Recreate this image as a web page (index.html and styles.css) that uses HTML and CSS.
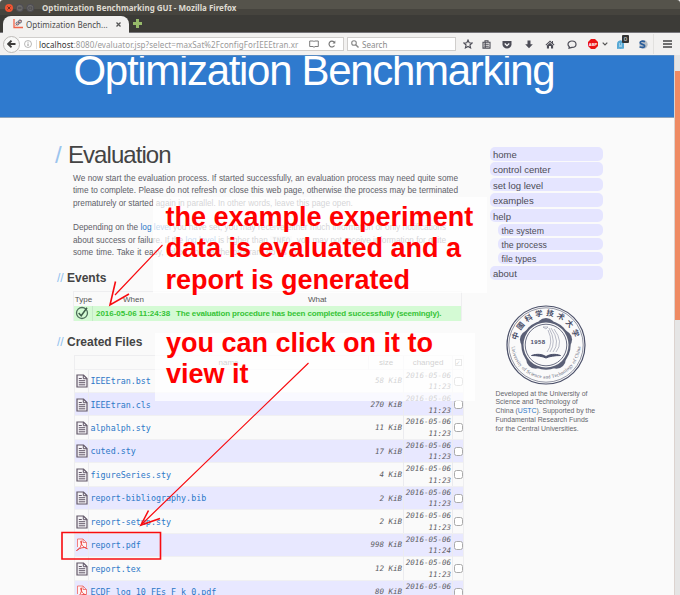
FILE: index.html
```html
<!DOCTYPE html>
<html lang="en">
<head>
<meta charset="utf-8">
<title>Optimization Benchmarking GUI</title>
<link rel="stylesheet" href="styles.css">
</head>
<body>
<svg width="0" height="0" class="defs">
  <symbol id="doc" viewBox="0 0 12 14"><path d="M1 1h6.500l3.500 3.500v8.500H1z" fill="#f4f2f6" stroke="#625868" stroke-width="1.200"/><path d="M7.300 1v3.700H11M2.800 4.500h3M2.800 6.700h6.400M2.800 8.700h6.400M2.800 10.800h6.400" fill="none" stroke="#625868" stroke-width="1"/></symbol>
  <symbol id="pdf" viewBox="0 0 12 14"><path d="M1.500 9V1h5.500l3.500 3.500V9M7 1v3.500h3.500" fill="#fff5f5" stroke="#f0635e" stroke-width=".8"/><path d="M.5 12.500C4 11.500 6.500 5.500 5.200 2.800 4 2.500 4.800 8.500 11.300 10.800 11 8.500 4 9.300.5 12.500z" fill="none" stroke="#ef4a45" stroke-width="1"/></symbol>
</svg>
<div class="window">
  <div class="titlebar">
    <svg class="lights" width="30" height="12" viewBox="0 0 30 12"><circle cx="4" cy="6" r="4" fill="#ee5433"/><path d="M2.500 4.500l3 3m0-3l-3 3" stroke="#71301f"/><circle cx="14.700" cy="6" r="3.600" fill="#6b6a68" stroke="#4c4b55"/><path d="M13 6h3.400" stroke="#45434a"/><circle cx="25.300" cy="6" r="3.600" fill="#6b6a68" stroke="#4c4b55"/><path d="M23.800 5h3v2.200h-3z" stroke="#45434a" fill="none" stroke-width=".7"/></svg>
    <span class="wintitle">Optimization Benchmarking GUI - Mozilla Firefox</span>
  </div>
  <div class="tabs">
    <div class="tab">
      <svg width="10" height="10" viewBox="0 0 10 10"><path d="M1 0v8.500h9" stroke="#f0644a" stroke-width="1.300" fill="none"/><path d="M2.500 6.500l2-1.500 4-4" stroke="#e86d5a" fill="none"/><circle cx="4.500" cy="4.500" r="1.500" fill="none" stroke="#5a6070"/><circle cx="7" cy="2.500" r="1.500" fill="none" stroke="#5a6070"/></svg>
      <span class="tabname">Optimization Bench...</span>
      <svg class="close" width="5" height="5" viewBox="0 0 5 5"><path d="M.5.5l4 4m0-4l-4 4" stroke="#555" stroke-width="1.300"/></svg>
    </div>
    <svg class="plus" width="9" height="9" viewBox="0 0 9 9"><path d="M4.500 0v9M0 4.500h9" stroke="#97b96a" stroke-width="3"/></svg>
  </div>
  <div class="toolbar">
    <div class="back"><svg width="9" height="8" viewBox="0 0 9 8"><path d="M8.500 4H1.500M4.500.7L1.200 4l3.300 3.300" fill="none" stroke="#3d3c3b" stroke-width="1.900"/></svg></div>
    <div class="url">
      <svg width="8" height="8" viewBox="0 0 8 8"><circle cx="4" cy="4" r="3.500" fill="none" stroke="#999" stroke-width=".7"/><path d="M4 3.500v2.500M4 1.800v.8" stroke="#888" stroke-width=".9"/></svg>
      <span class="address"><b>localhost</b>:8080/evaluator.jsp?select=maxSat%2FconfigForIEEEtran.xr</span>
      <svg class="reader" width="10" height="8" viewBox="0 0 10 8"><path d="M.7 1h3.500l.8.700L5.800 1h3.500v5.500H6L5 7.300 4 6.500H.7z" fill="none" stroke="#7b7b7b"/></svg>
      <svg class="reload" width="8" height="8" viewBox="0 0 8 8"><path d="M6.500 5.500A2.900 2.900 0 1 1 6 2" fill="none" stroke="#777" stroke-width="1.200"/><path d="M7.300.5v3H4.500z" fill="#777"/></svg>
    </div>
    <div class="search"><svg width="8" height="8" viewBox="0 0 8 8"><circle cx="3" cy="3" r="2.300" fill="none" stroke="#888" stroke-width="1.100"/><path d="M4.700 4.700l2.800 2.800" stroke="#888" stroke-width="1.400"/></svg><span>Search</span></div>
    <div class="tools">
      <i><svg width="10" height="10" viewBox="0 0 10 10"><path d="M5 1l1.200 2.700 2.900.3-2.200 2 .7 2.900L5 7.400 2.400 8.900 3.100 6 .9 4l2.900-.3z" fill="none" stroke="#4d4d56" stroke-width="1.100"/></svg></i>
      <i><svg width="9" height="9" viewBox="0 0 9 9"><path d="M1 2.200h7v5.900H1zM3 2V.8h3V2M2.300 4.300h4.500M2.300 6.200h4.500M3.200 2.200v5.500" fill="none" stroke="#4d4d56" stroke-width="1.100"/></svg></i>
      <i><svg width="10" height="9" viewBox="0 0 10 9"><path d="M.5 1h9v3.200a4.500 4.300 0 0 1-9 0z" fill="#4d4d56"/><path d="M2.700 3.500L5 5.600l2.300-2.100" fill="none" stroke="#fff" stroke-width="1.200"/></svg></i>
      <i><svg width="8" height="9" viewBox="0 0 8 9"><path d="M2.500.5h3v3.700h2.300L4 8.300.2 4.200h2.300z" fill="#4d4d56"/></svg></i>
      <i><svg width="10" height="9" viewBox="0 0 10 9"><path d="M5 .5L.5 4.700l.7.700L5 1.900l3.800 3.500.7-.7L8 3.300V1H7v1.300z" fill="#4d4d56"/><path d="M1.900 5.500L5 2.700l3.100 2.800v3H6V6H4v2.500H1.900z" fill="#4d4d56"/></svg></i>
      <i><svg width="10" height="9" viewBox="0 0 10 9"><path d="M5 1c2.300 0 4 1.400 4 3.200S7.300 7.400 5 7.400L2 8.200l.3-1.500C1.400 6 1 5.200 1 4.200 1 2.400 2.700 1 5 1z" fill="none" stroke="#4d4d56" stroke-width="1.200"/></svg></i>
      <i><svg width="10" height="10" viewBox="0 0 10 10"><path d="M3 0h4l3 3v4l-3 3H3L0 7V3z" fill="#ea1212"/><text x="5" y="6.500" class="abp">ABP</text></svg></i>
      <i><svg width="6" height="4" viewBox="0 0 6 4"><path d="M.7.7L3 3 5.300.7" fill="none" stroke="#555" stroke-width="1.200"/></svg></i>
      <i class="ghost"><svg width="9" height="9" viewBox="0 0 9 9"><path d="M1.500 8.300V3.800a3 3 0 0 1 6 0v4.500l-1.500-.6-1.500.8-1.500-.8zM1 8.200h6" fill="#58a9d5" stroke="#58a9d5"/><path d="M3 4h1M5 4h1M3 6h3" stroke="#fff" stroke-width=".8"/></svg><b>0</b></i>
      <i><svg width="10" height="9" viewBox="0 0 10 9"><circle cx="5.500" cy="4.500" r="4.200" fill="#b9bfc6"/><path d="M7 1.800C4.500.5 2 1.400 2.200 2.900c.2 1.800 4.500 1.200 4.500 3 0 1.600-2.700 2-5.200.9" fill="none" stroke="#2b5d9a" stroke-width="1.700"/></svg></i>
      <i><svg width="9" height="8" viewBox="0 0 9 8"><path d="M0 1h9M0 4h9M0 7h9" stroke="#444" stroke-width="1.500"/></svg></i>
    </div>
  </div>
  <div class="view">
    <div class="page">
      <header><h1>Optimization Benchmarking</h1></header>
      <div class="columns">
        <main>
          <h2><span>/</span>Evaluation</h2>
          <div class="prose">
            <p>We now start the evaluation process. If started successfully, an evaluation process may need quite some</p>
            <p>time to complete. Please do not refresh or close this web page, otherwise the process may be terminated</p>
            <p class="w3">prematurely or started again in parallel. In other words, leave this page open.</p>
          </div>
          <div class="prose">
            <p class="w4">Depending on the <a>log level</a> you have set, you may receive either much information or only notifications</p>
            <p class="w5">about success or failure. If the <a>log level</a> is higher than <code>INFO</code>, you may not receive information for quite</p>
            <p class="w6">some time. Take it easy, relax, and let the program do its job.</p>
          </div>
          <h3><span>//</span>Events</h3>
          <div class="events">
            <div class="ehead"><span>Type</span><span>When</span><span>What</span></div>
            <div class="erow"><div><svg width="14" height="14" viewBox="0 0 14 14"><circle cx="7" cy="7" r="5.500" fill="none" stroke="#4f6f5b" stroke-width="1.300"/><path d="M3.700 7l2.500 2.800L12 1.800" fill="none" stroke="#3f5f4b" stroke-width="1.500"/></svg></div><time>2016-05-06 11:24:38</time><span>The evaluation procedure has been completed successfully (seemingly).</span></div>
          </div>
          <h3 class="files-title"><span>//</span>Created Files</h3>
          <div class="files">
            <div class="row head"><div class="title">name</div><div>size</div><div>changed</div><div><em class="box">✓</em></div></div>
            <div class="row"><div><svg><use href="#doc"/></svg></div><a>IEEEtran.bst</a><div class="size">58 KiB</div><div class="date">2016-05-06<br>11:23</div><div><em class="box"></em></div></div>
            <div class="row"><div><svg><use href="#doc"/></svg></div><a>IEEEtran.cls</a><div class="size">270 KiB</div><div class="date">2016-05-06<br>11:23</div><div><em class="box"></em></div></div>
            <div class="row"><div><svg><use href="#doc"/></svg></div><a>alphalph.sty</a><div class="size">11 KiB</div><div class="date">2016-05-06<br>11:23</div><div><em class="box"></em></div></div>
            <div class="row"><div><svg><use href="#doc"/></svg></div><a>cuted.sty</a><div class="size">17 KiB</div><div class="date">2016-05-06<br>11:23</div><div><em class="box"></em></div></div>
            <div class="row"><div><svg><use href="#doc"/></svg></div><a>figureSeries.sty</a><div class="size">4 KiB</div><div class="date">2016-05-06<br>11:23</div><div><em class="box"></em></div></div>
            <div class="row"><div><svg><use href="#doc"/></svg></div><a>report-bibliography.bib</a><div class="size">2 KiB</div><div class="date">2016-05-06<br>11:23</div><div><em class="box"></em></div></div>
            <div class="row"><div><svg><use href="#doc"/></svg></div><a>report-setup.sty</a><div class="size">2 KiB</div><div class="date">2016-05-06<br>11:23</div><div><em class="box"></em></div></div>
            <div class="row"><div><svg><use href="#pdf"/></svg></div><a>report.pdf</a><div class="size">998 KiB</div><div class="date">2016-05-06<br>11:24</div><div><em class="box"></em></div></div>
            <div class="row"><div><svg><use href="#doc"/></svg></div><a>report.tex</a><div class="size">12 KiB</div><div class="date">2016-05-06<br>11:23</div><div><em class="box"></em></div></div>
            <div class="row"><div><svg><use href="#pdf"/></svg></div><a>ECDF_log_10_FEs_F_k_0.pdf</a><div class="size">80 KiB</div><div class="date">2016-05-06<br>&nbsp;</div><div><em class="box"></em></div></div>
          </div>
        </main>
        <aside>
          <nav>
            <a>home</a><a>control center</a><a>set log level</a><a>examples</a><a>help</a>
            <a class="sub">the system</a><a class="sub">the process</a><a class="sub">file types</a><a>about</a>
          </nav>
          <svg class="seal" width="80" height="80" viewBox="-40 -40 80 80">
            <defs><path id="arcTop" d="M-28.500 5A29 29 0 1 1 28.500 5"/><path id="arcBottom" d="M-34.500 -1A34.500 34.500 0 0 0 34.500 -1"/></defs>
            <circle r="39" fill="none" stroke="#4b5069" stroke-width="1.200"/><circle r="37.200" fill="none" stroke="#4b5069" stroke-width=".6"/>
            <g fill="#5b6076"><circle r="24.700"/><circle cy="-17.500" r="9.500"/><circle cx="16.600" cy="-5.400" r="9.500"/><circle cx="10.300" cy="14.200" r="9.500"/><circle cx="-10.300" cy="14.200" r="9.500"/><circle cx="-16.600" cy="-5.400" r="9.500"/></g>
            <circle r="22.500" fill="#fafafa"/><circle r="20.800" fill="none" stroke="#5b6076" stroke-width=".9"/>
            <path d="M-14.500 10.500C-9 8.500-4 9.200 0 11.500 4 9.200 9 8.500 14.500 10.500 9 10.500 3 11.500 0 13-3 11.500-9 10.500-14.500 10.500z" fill="#4b5069" stroke="#4b5069"/>
            <path d="M-3-18l5 0-2 2zM4 7Q11-3 3-17M7 7Q15-3 5-17M10 7Q18-3 8-16M1 7Q8-2 2-15" fill="none" stroke="#8b8fa3" stroke-width=".6"/>
            <text class="year" x="-8" y="-1.500">1958</text>
            <text class="cn"><textPath href="#arcTop" startOffset="50%">中國科学技术大学</textPath></text>
            <text class="en"><textPath href="#arcBottom" startOffset="50%" textLength="103">University of Science and Technology of China</textPath></text>
          </svg>
          <div class="credit"><p>Developed at the University of</p><p>Science and Technology of</p><p>China (<a>USTC</a>). Supported by the</p><p>Fundamental Research Funds</p><p>for the Central Universities.</p></div>
        </aside>
      </div>
    </div>
    <div class="scroll"><div class="thumb"></div></div>
  </div>
  <div class="note first"><p>the example experiment</p><p>data is evaluated and a</p><p>report is generated</p></div>
  <div class="note second"><p>you can click on it to</p><p>view it</p></div>
  <svg class="arrows" width="680" height="595" viewBox="0 0 680 595"><g fill="none" stroke="#f80c10"><path d="M162.500 245L115 295M308.500 363L141 525" stroke-width="1.200"/><path d="M115.500 281.500L110 305l19-11M148.500 510.500L141 525l19-6.500" stroke-width="1.600"/><path d="M62 532.500h98.500v26.500H62z" stroke-width="1.600"/></g></svg>
</div>
</body>
</html>
```
FILE: styles.css
```css
* { box-sizing: border-box; }
body { margin: 0; font-family: "Liberation Sans", Arial, sans-serif; }
p, h1, h2, h3 { margin: 0; font-weight: normal; white-space: nowrap; }
svg { display: block; flex: none; }
.defs { position: absolute; }
.window { position: relative; width: 680px; height: 595px; overflow: hidden; display: flex; flex-direction: column; background: #fafafa; }

.titlebar { height: 15px; background: linear-gradient(#55534b 0 9px, #46443e 9px); display: flex; align-items: center; padding: 1px 0 0 5px; border-radius: 3px 3px 0 0; }
.wintitle { margin-left: 7px; color: #dfdbd2; font: bold 8px/12px "Noto Sans", sans-serif; letter-spacing: 0; white-space: nowrap; }
.tabs { height: 18px; background: #3c3b37; border-bottom: 1px solid #77767b; display: flex; align-items: center; }
.tab { height: 17px; width: 126px; margin: 1px 0 0 3px; background: #f2f1f0; border-radius: 8px 8px 0 0; display: flex; align-items: center; padding-left: 10px; }
.tabname { margin-left: 3px; width: 84px; font: 8px "Noto Sans", sans-serif; color: #4b4b4b; letter-spacing: .05px; white-space: nowrap; }
.close { margin-left: 6px; }
.plus { margin-left: 4px; }
.toolbar { height: 22px; background: #f2f1f0; display: flex; align-items: center; }
.back { width: 17px; height: 17px; margin-left: 3px; border: 1px solid #bdbab7; border-radius: 50%; background: #f8f8f7; display: flex; align-items: center; justify-content: center; z-index: 1; }
.url { width: 325px; height: 14px; margin-left: -1px; background: #fff; border: 1px solid #d0cecc; border-left: 0; display: flex; align-items: center; padding-left: 5px; }
.address { margin-left: 4px; border-left: 1px solid #ddd; padding-left: 2px; width: 270px; white-space: nowrap; font: 8px/9px "Noto Sans", sans-serif; letter-spacing: .08px; color: #999; }
.address b { font-weight: normal; color: #333; }
.reader { margin-left: 3px; }
.reload { margin-left: 9px; }
.search { width: 109px; height: 14px; margin-left: 3px; background: #fff; border: 1px solid #d0cecc; display: flex; align-items: center; gap: 3px; padding-left: 3px; font: 8px "Noto Sans", sans-serif; color: #8b8b8b; }
.tools { display: grid; grid-template-columns: 16px 20px 22px 21px 22px 21px 18px 8px 24px 21px 27px; margin-left: 4px; }
.tools i { display: flex; align-items: center; justify-content: center; height: 20px; font-style: normal; }
.tools i:nth-child(7) { padding-left: 4px; }
.tools i:nth-child(8) { justify-content: flex-end; }
.tools i:last-child { border-left: 1px solid #e2e1df; }
.abp { font: bold 4px "Liberation Sans"; fill: #fff; text-anchor: middle; }
.ghost { position: relative; }
.ghost b { position: absolute; left: 14px; top: 1px; width: 7px; height: 8px; background: #333; color: #eee; font: 6px/8px "Noto Sans"; text-align: center; border-radius: 1px; }

.view { height: 540px; display: flex; overflow: hidden; }
.page { width: 674px; }
.scroll { width: 6px; padding-top: 16px; background: #e5e5e5; border-left: 1px solid #dcd3cf; }
.thumb { height: 249px; background: #ef8a63; }
header { height: 62.500px; background: #2f7ace; overflow: hidden; border-bottom: 1px solid #8ba2bb; border-top: 1px solid #568bc4; }
h1 { margin: -8px 0 0 73.500px; color: #fff; font-size: 42px; line-height: 46px; letter-spacing: -1.310px; }
.columns { display: flex; }
main { width: 490px; padding-top: 23px; }
h2 { height: 32px; line-height: 28px; font-size: 24px; letter-spacing: -.95px; color: #444; display: flex; padding-left: 55px; }
h2 span { width: 13px; color: #9cc5ee; }
.prose { margin: 0 0 12px 73px; width: 385px; color: #606068; font-size: 8.250px; line-height: 12.600px; letter-spacing: -.01px; }
.prose p { text-align-last: justify; }
.prose .w3 { width: 278px; }
.prose .w4, .prose .w5 { width: 373px; }
.prose .w6 { width: 230px; }
code { font: 7.500px/1 "DejaVu Sans Mono", monospace; background: #f1f1f1; padding: 0 2px; }
a { color: #2c78c8; }
h3 { display: flex; height: 13px; line-height: 13px; padding-left: 57px; font-weight: bold; font-size: 12px; color: #444; margin-top: 4px; letter-spacing: 0; }
h3 span { width: 10px; color: #8fc0ee; font-weight: normal; }
.events { margin: 6px 0 0 73px; width: 388.500px; height: 30px; border: 1px solid #eeeef0; }
.ehead { height: 13.500px; display: grid; grid-template-columns: 19px 81px 1fr; font-size: 8px; line-height: 15px; color: #555; text-align: center; }
.erow { height: 15px; display: flex; align-items: center; background: #d4fad4; color: #36c436; font-size: 8px; font-weight: bold; white-space: nowrap; }
.erow div { width: 19px; height: 15px; padding-left: 1px; border-right: 1px solid #c5e8c8; }
.erow time { width: 76px; margin-left: 3px; letter-spacing: -.03px; font-weight: bold; }
.erow span { width: 266px; margin-left: 4px; letter-spacing: -.15px; }
.files-title { margin-top: 14.500px; }
.files { margin: 6px 0 0 74px; width: 390px; border: 1px solid #eeeef0; border-bottom: 0; }
.row { height: 23.450px; display: grid; grid-template-columns: 14px 280px 35px 49px 1fr; align-items: center; border-top: 1px solid #f0f0f2; color: #5b5b62; background: #fafafa; }
.row:nth-child(odd) { background: #e8e8ff; }
.row.head { height: 13px; line-height: 14px; background: #fafafa; border-top: 0; font-size: 8px; text-align: center; grid-template-columns: 294px 35px 49px 1fr; color: #555; }
.row.head .title { padding-left: 14px; }
.row > div { border-right: 1px solid #ebebef; height: 100%; display: flex; align-items: center; justify-content: center; }
.row > div:last-child { border: 0; }
.row svg { width: 12px; height: 14px; }
.row a { font: 8.370px "DejaVu Sans Mono", monospace; padding-left: 1.500px; }
.row .size, .row .date { font: italic 7.500px/11.500px "DejaVu Sans Mono", monospace; text-align: right; justify-content: flex-end; padding-right: 1px; white-space: nowrap; }
.box { width: 9px; height: 9px; border: 1px solid #aaa; border-radius: 2.500px; background: #fff; font: 6px/7px "DejaVu Sans"; text-align: center; }
.head .box { width: 7px; height: 7px; line-height: 5px; border-radius: 0; }

aside { width: 184px; padding-top: 29.500px; }
nav { width: 112.500px; display: flex; flex-direction: column; gap: 1.700px; }
nav a { height: 13.700px; line-height: 15px; background: #e5e5ff; border-radius: 5px; color: #4c4c55; font-size: 9.500px; padding-left: 3px; }
nav .sub { height: 12.300px; line-height: 14px; font-size: 8.700px; margin-left: 8px; padding-left: 3.500px; letter-spacing: .05px; }
.seal { margin: 25px 0 0 16px; }
.year { font: bold 6px "Liberation Sans"; fill: #4b5069; text-anchor: middle; letter-spacing: .4px; }
.cn { font: bold 7.500px "Noto Sans CJK SC", sans-serif; fill: #4b5069; text-anchor: middle; letter-spacing: 2.800px; }
.en { font: 5px "Liberation Serif", serif; fill: #5b5f74; text-anchor: middle; }
.credit { margin: 5px 0 0 5.500px; font-size: 6.900px; line-height: 8.750px; color: #66666c; }

.note { position: absolute; background: rgba(255,255,255,.73); color: #ff0000; font-size: 27px; line-height: 31.500px; }
.note p { font-weight: bold; }
.first { left: 153px; top: 197px; width: 334px; height: 96px; padding: 4.500px 0 0 12.500px; }
.second { left: 155px; top: 333px; width: 320px; height: 68px; padding-left: 11px; }
.second p:first-child { margin-top: -5.500px; }
.arrows { position: absolute; left: 0; top: 0; }
```
